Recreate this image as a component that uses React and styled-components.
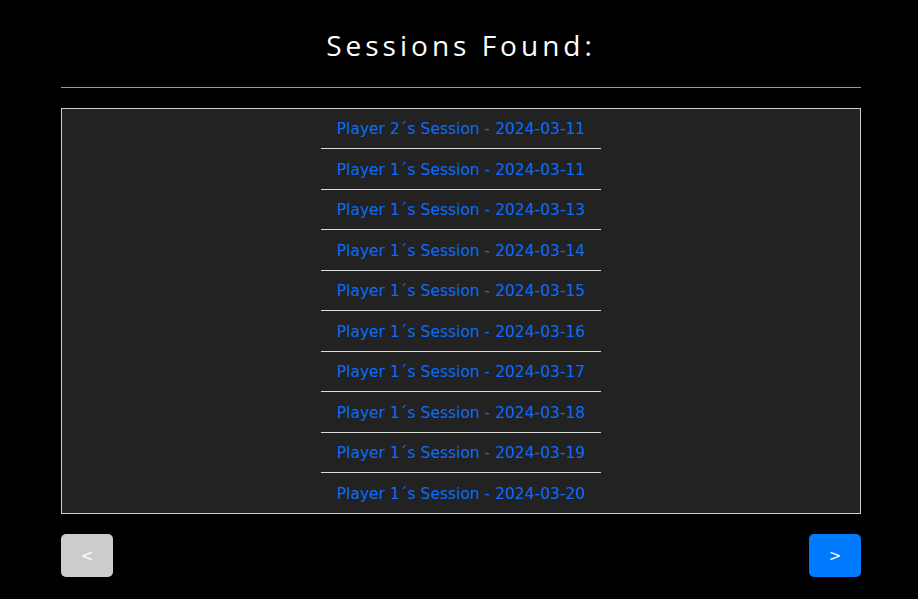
import React from "react";
import styled, { createGlobalStyle } from "styled-components";

const Global = createGlobalStyle`
  html, body { margin: 0; padding: 0; background: #000; }
  body { font-family: "DejaVu Sans", sans-serif; }
`;

const Page = styled.div`
  width: 800px;
  margin: 0 0 0 61px;
  padding-top: 25px;
`;

const Title = styled.h1`
  margin: 0;
  text-align: center;
  font-family: "Open Sans", sans-serif;
  font-weight: 400;
  font-size: 28px;
  letter-spacing: 4px;
  line-height: 40px;
  color: #fff;
`;

const Rule = styled.hr`
  margin: 22px 0 19.5px;
  border: 0;
  border-top: 1px solid #999;
`;

const ListBox = styled.div`
  background: #222;
  border: 1px solid #ccc;
  display: flex;
  flex-direction: column;
  align-items: center;
`;

const Item = styled.a`
  display: block;
  width: 280px;
  text-align: center;
  padding: 11.5px 0 8.5px;
  line-height: 19.5px;
  font-size: 15.5px;
  color: #0a6cff;
  text-decoration: none;
  border-bottom: 1px solid #ddd;
  ${(p) => (p.$last ? "border-bottom: none;" : "")}
`;

const Nav = styled.div`
  display: flex;
  justify-content: space-between;
  margin-top: 20.5px;
`;

const NavButton = styled.button`
  width: 52px;
  height: 43px;
  border: none;
  border-radius: 5px;
  background: ${(p) => (p.$disabled ? "#ccc" : "#007bff")};
  color: #fff;
  font-family: "DejaVu Sans", sans-serif;
  font-size: 15px;
  cursor: ${(p) => (p.$disabled ? "default" : "pointer")};
`;

const sessions = [
  ["2", "2024-03-11"],
  ["1", "2024-03-11"],
  ["1", "2024-03-13"],
  ["1", "2024-03-14"],
  ["1", "2024-03-15"],
  ["1", "2024-03-16"],
  ["1", "2024-03-17"],
  ["1", "2024-03-18"],
  ["1", "2024-03-19"],
  ["1", "2024-03-20"],
];

export default function App() {
  return (
    <>
      <Global />
      <Page>
        <Title>Sessions Found:</Title>
        <Rule />
        <ListBox>
          {sessions.map(([p, d], i) => (
            <Item key={i} href="#" $last={i === sessions.length - 1}>
              Player {p}´s Session - {d}
            </Item>
          ))}
        </ListBox>
        <Nav>
          <NavButton $disabled>&lt;</NavButton>
          <NavButton>&gt;</NavButton>
        </Nav>
      </Page>
    </>
  );
}
